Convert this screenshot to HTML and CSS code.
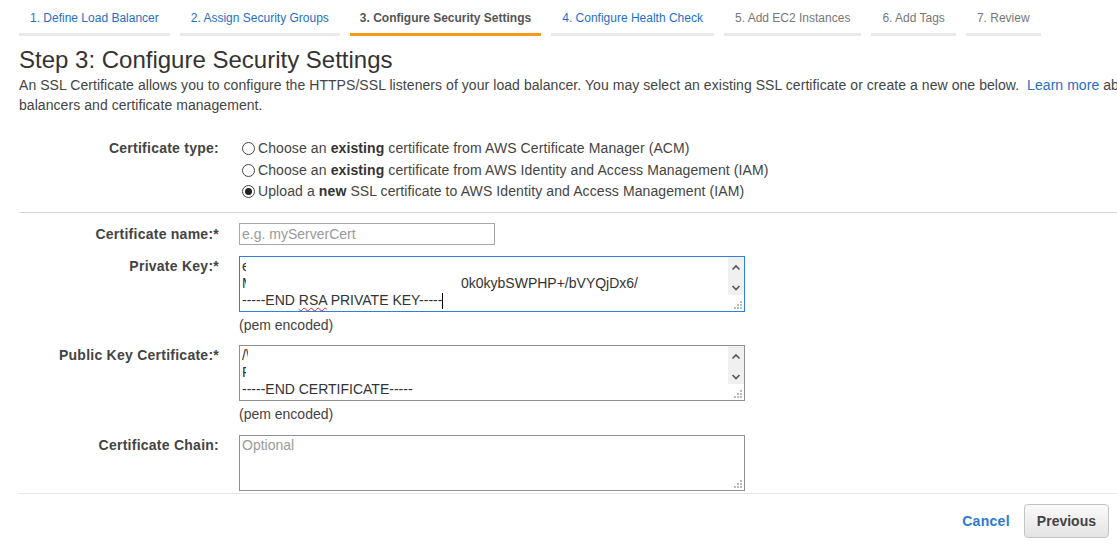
FILE: index.html
```html
<!DOCTYPE html>
<html>
<head>
<meta charset="utf-8">
<link rel="stylesheet" href="styles.css">
</head>
<body>
<div class="page">
  <nav class="tabs">
    <a class="tab done">1. Define Load Balancer</a>
    <a class="tab done">2. Assign Security Groups</a>
    <a class="tab active">3. Configure Security Settings</a>
    <a class="tab done">4. Configure Health Check</a>
    <a class="tab todo">5. Add EC2 Instances</a>
    <a class="tab todo">6. Add Tags</a>
    <a class="tab todo">7. Review</a>
  </nav>

  <div class="intro">
    <h1>Step 3: Configure Security Settings</h1>
    <p>An SSL Certificate allows you to configure the HTTPS/SSL listeners of your load balancer. You may select an existing SSL certificate or create a new one below.&nbsp; <a class="link">Learn more</a> about load balancers and certificate management.</p>
  </div>

  <section class="cert-type">
    <div class="label">Certificate type:</div>
    <div class="radios">
      <div class="radio-row"><span class="radio"></span>Choose an <b>existing</b> certificate from AWS Certificate Manager (ACM)</div>
      <div class="radio-row"><span class="radio"></span>Choose an <b>existing</b> certificate from AWS Identity and Access Management (IAM)</div>
      <div class="radio-row"><span class="radio checked"></span>Upload a <b>new</b> SSL certificate to AWS Identity and Access Management (IAM)</div>
    </div>
  </section>

  <section class="fields">
    <div class="label lbl-input">Certificate name:*</div>
    <div class="control row-name">
      <div class="input"><span class="ph">e.g. myServerCert</span></div>
    </div>

    <div class="label">Private Key:*</div>
    <div class="control row-key">
      <div class="textarea focused">
        <div class="ta-line"><span class="clip">e</span></div>
        <div class="ta-line"><span class="clip">M</span><span class="tail">0k0kybSWPHP+/bVYQjDx6/</span></div>
        <div class="ta-line">-----END <span class="spell">RSA</span> PRIVATE KEY-----<span class="caret"></span></div>
        <div class="scroll">
          <svg width="16" height="38" viewBox="0 0 16 38"><path d="M4.5 12.5 L8 9 L11.5 12.5" fill="none" stroke="#555" stroke-width="1.6"/><path d="M4.5 29 L8 32.5 L11.5 29" fill="none" stroke="#555" stroke-width="1.6"/></svg>
        </div>
        <svg class="grip" width="8" height="8" viewBox="0 0 8 8"><rect x="6" y="0" width="2" height="2" fill="#bbb"/><rect x="3" y="3" width="2" height="2" fill="#bbb"/><rect x="6" y="3" width="2" height="2" fill="#bbb"/><rect x="0" y="6" width="2" height="2" fill="#bbb"/><rect x="3" y="6" width="2" height="2" fill="#bbb"/><rect x="6" y="6" width="2" height="2" fill="#bbb"/></svg>
      </div>
      <div class="hint">(pem encoded)</div>
    </div>

    <div class="label">Public Key Certificate:*</div>
    <div class="control row-pub">
      <div class="textarea">
        <div class="ta-line"><span class="clip wide">/\</span></div>
        <div class="ta-line"><span class="clip">F</span></div>
        <div class="ta-line">-----END CERTIFICATE-----</div>
        <div class="scroll">
          <svg width="16" height="38" viewBox="0 0 16 38"><path d="M4.5 12.5 L8 9 L11.5 12.5" fill="none" stroke="#555" stroke-width="1.6"/><path d="M4.5 29 L8 32.5 L11.5 29" fill="none" stroke="#555" stroke-width="1.6"/></svg>
        </div>
        <svg class="grip" width="8" height="8" viewBox="0 0 8 8"><rect x="6" y="0" width="2" height="2" fill="#bbb"/><rect x="3" y="3" width="2" height="2" fill="#bbb"/><rect x="6" y="3" width="2" height="2" fill="#bbb"/><rect x="0" y="6" width="2" height="2" fill="#bbb"/><rect x="3" y="6" width="2" height="2" fill="#bbb"/><rect x="6" y="6" width="2" height="2" fill="#bbb"/></svg>
      </div>
      <div class="hint">(pem encoded)</div>
    </div>

    <div class="label">Certificate Chain:</div>
    <div class="control row-chain">
      <div class="textarea">
        <div class="ta-line ph">Optional</div>
        <svg class="grip" width="8" height="8" viewBox="0 0 8 8"><rect x="6" y="0" width="2" height="2" fill="#bbb"/><rect x="3" y="3" width="2" height="2" fill="#bbb"/><rect x="6" y="3" width="2" height="2" fill="#bbb"/><rect x="0" y="6" width="2" height="2" fill="#bbb"/><rect x="3" y="6" width="2" height="2" fill="#bbb"/><rect x="6" y="6" width="2" height="2" fill="#bbb"/></svg>
      </div>
    </div>
  </section>

  <footer class="actions">
    <a class="cancel">Cancel</a>
    <button class="btn">Previous</button>
  </footer>
</div>
</body>
</html>
```

FILE: styles.css
```css
html, body {
  margin: 0;
  padding: 0;
  overflow: hidden;
  background: #fff;
}
body {
  font-family: "Liberation Sans", Arial, sans-serif;
  color: #444;
  font-size: 14px;
}
.page {
  width: 1117px;
}
.tabs {
  display: flex;
  gap: 10px;
  padding-left: 19px;
}
.tab {
  font-size: 12px;
  line-height: 16px;
  padding: 10px 11px 7px;
  border-bottom: 3px solid #e9e9e9;
  white-space: nowrap;
}
.tab.done { color: #1f6fc5; }
.tab.todo { color: #777; }
.tab.active {
  color: #555;
  font-weight: bold;
  border-bottom-color: #f7981d;
  padding: 10px 10px 7px;
}
.intro {
  padding-left: 19px;
  overflow: hidden;
}
h1 {
  margin: 10px 0 0;
  font-size: 24px;
  line-height: 28px;
  font-weight: normal;
  color: #333;
}
.intro p {
  margin: 1px 0 0;
  width: 1190px;
  line-height: 20px;
  color: #444;
  letter-spacing: 0.06px;
}
.link { color: #1f6fc5; }

.cert-type, .fields {
  display: grid;
  grid-template-columns: 200px 1fr;
  column-gap: 20px;
  margin-left: 19px;
}
.cert-type {
  padding: 23px 0 9px;
  border-bottom: 1px solid #d9d9d9;
}
.label {
  text-align: right;
  font-weight: bold;
  color: #444;
  line-height: 20px;
  letter-spacing: 0.25px;
}
.cert-type .label { line-height: 21.5px; }
.radio-row {
  display: flex;
  align-items: center;
  line-height: 21.5px;
  color: #444;
  white-space: nowrap;
  letter-spacing: 0.1px;
}
.radio-row b { color: #333; margin: 0 4px; }
.radio {
  width: 11px;
  height: 11px;
  border: 1px solid #444;
  border-radius: 50%;
  margin: 0 3px 0 3px;
  display: flex;
  align-items: center;
  justify-content: center;
  box-sizing: content-box;
}
.radio.checked::after {
  content: "";
  width: 7px;
  height: 7px;
  border-radius: 50%;
  background: #222;
}
.fields {
  padding-top: 10px;
  padding-bottom: 1px;
  border-bottom: 1px solid #e6e6e6;
}
.lbl-input { line-height: 22px; }
.control { margin-bottom: 11px; }
.row-pub { margin-bottom: 12px; }
.row-chain { margin-bottom: 1px; }
.input {
  width: 256px;
  height: 22px;
  box-sizing: border-box;
  border: 1px solid #a9a9a9;
  padding: 0 2px;
  line-height: 20px;
}
.ph { color: #9a9a9a; }
.textarea {
  position: relative;
  width: 506px;
  height: 56px;
  box-sizing: border-box;
  border: 1px solid #8f8f8f;
  padding: 1px 2px;
  color: #333;
  overflow: hidden;
}
.textarea.focused { border-color: #2f80d8; }
.ta-line {
  line-height: 17px;
  height: 17px;
  white-space: nowrap;
}
.clip {
  display: inline-block;
  width: 4px;
  overflow: hidden;
  vertical-align: top;
}
.clip.wide { width: 6px; }
.tail { margin-left: 215px; }
.spell {
  text-decoration: underline wavy #e02020;
  text-decoration-thickness: 1px;
  text-underline-offset: 2px;
}
.caret {
  display: inline-block;
  width: 1px;
  height: 16px;
  background: #000;
  vertical-align: top;
  margin-top: 1px;
}
.scroll {
  position: absolute;
  right: 0;
  top: 0;
  width: 16px;
  height: 38px;
  background: #f0f0f0;
}
.scroll svg { display: block; }
.grip {
  position: absolute;
  right: 2px;
  bottom: 2px;
}
.hint {
  margin-top: 4px;
  line-height: 18px;
  color: #444;
}
.actions {
  display: flex;
  justify-content: flex-end;
  align-items: center;
  padding: 10px 8px 0 0;
  gap: 14px;
}
.cancel {
  color: #2b7bd0;
  font-weight: bold;
  font-size: 14px;
  letter-spacing: 0.3px;
}
.btn {
  height: 34px;
  padding: 0 12px;
  font-family: "Liberation Sans", Arial, sans-serif;
  font-size: 14px;
  font-weight: bold;
  color: #444;
  background: linear-gradient(#fafafa, #e4e4e4);
  border: 1px solid #c4c4c4;
  border-radius: 4px;
}
```
